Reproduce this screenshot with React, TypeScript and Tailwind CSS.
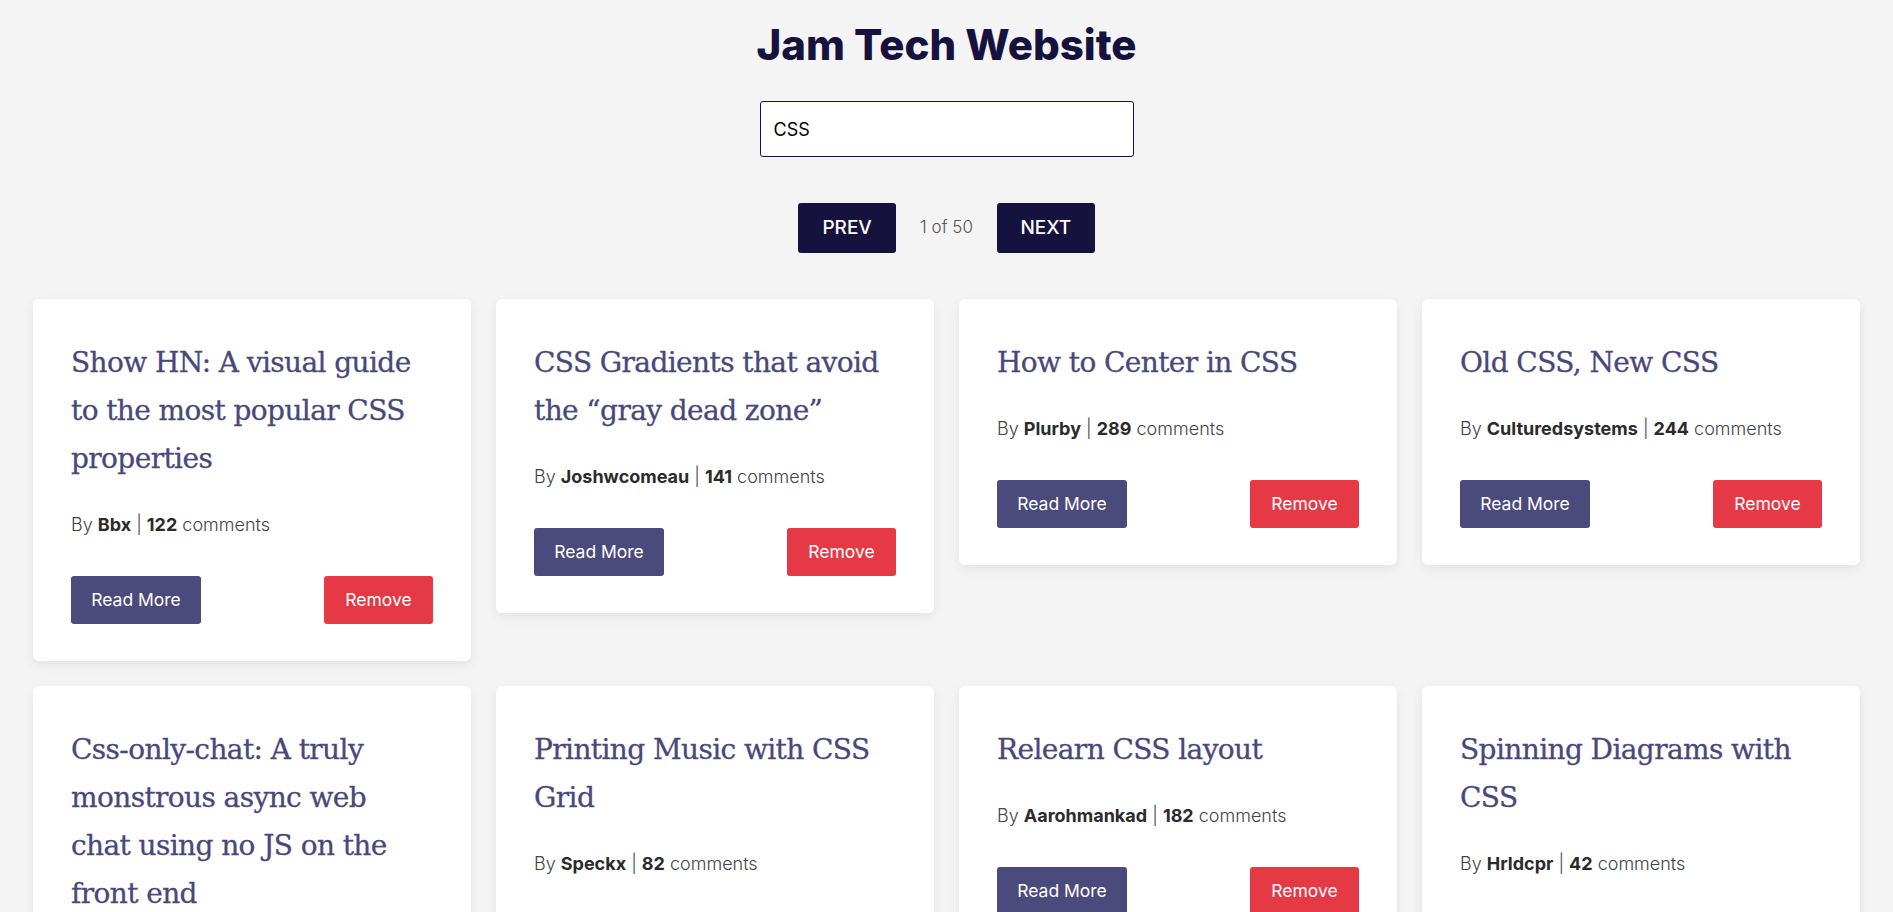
import React from "react";

type Post = { title: string; author: string; comments: number };

const posts: Post[] = [
  { title: "Show HN: A visual guide to the most popular CSS properties", author: "Bbx", comments: 122 },
  { title: "CSS Gradients that avoid the \u201cgray dead zone\u201d", author: "Joshwcomeau", comments: 141 },
  { title: "How to Center in CSS", author: "Plurby", comments: 289 },
  { title: "Old CSS, New CSS", author: "Culturedsystems", comments: 244 },
  { title: "Css-only-chat: A truly monstrous async web chat using no JS on the front end", author: "Kkuchta", comments: 118 },
  { title: "Printing Music with CSS Grid", author: "Speckx", comments: 82 },
  { title: "Relearn CSS layout", author: "Aarohmankad", comments: 182 },
  { title: "Spinning Diagrams with CSS", author: "Hrldcpr", comments: 42 },
];

function Card({ post }: { post: Post }) {
  return (
    <div className="rounded-[6px] bg-white px-[38px] pt-[40px] pb-[37px] shadow-[0_4px_12px_rgba(0,0,0,0.07)]">
      <h2 className="font-['DejaVu_Serif',serif] text-[28px] leading-[48px] text-[#48487a] tracking-[-0.6px] [-webkit-text-stroke:0.3px_#48487a]">
        {post.title}
      </h2>
      <p className="mt-[28px] text-[18px] leading-[27px] text-[#444] font-light">
        By <span className="font-bold text-[#2b2b2b]">{post.author}</span> |{" "}
        <span className="font-bold text-[#2b2b2b]">{post.comments}</span> comments
      </p>
      <div className="mt-[38px] flex items-center justify-between">
        <button className="h-[48px] w-[130px] rounded-[3px] bg-[#4a4a7c] text-[17.5px] text-white">
          Read More
        </button>
        <button className="h-[48px] w-[109px] rounded-[3px] bg-[#e63946] text-[17.5px] text-white">
          Remove
        </button>
      </div>
    </div>
  );
}

export default function App() {
  return (
    <div className="min-h-screen bg-[#f4f4f4] font-['Inter',sans-serif] pb-10">
      <h1 className="pt-[12px] text-center text-[42px] leading-[66px] font-extrabold text-[#15133d]">
        Jam Tech Website
      </h1>
      <div className="mt-[23px] flex justify-center">
        <input
          defaultValue="CSS"
          className="h-[56px] w-[374px] rounded-[3px] border border-[#15133d] bg-white px-[13px] text-[18px] text-black outline-none"
        />
      </div>
      <div className="mt-[46px] flex items-center justify-center gap-[24px]">
        <button className="h-[50px] w-[98px] rounded-[3px] bg-[#15133d] text-[19px] font-medium text-white">PREV</button>
        <span className="text-[17px] font-light text-[#555]">1 of 50</span>
        <button className="h-[50px] w-[98px] rounded-[3px] bg-[#15133d] text-[19px] font-medium text-white">NEXT</button>
      </div>
      <div className="mt-[46px] grid grid-cols-4 items-start gap-[25px] px-[33px]">
        {posts.map((p) => (
          <Card key={p.title} post={p} />
        ))}
      </div>
    </div>
  );
}
